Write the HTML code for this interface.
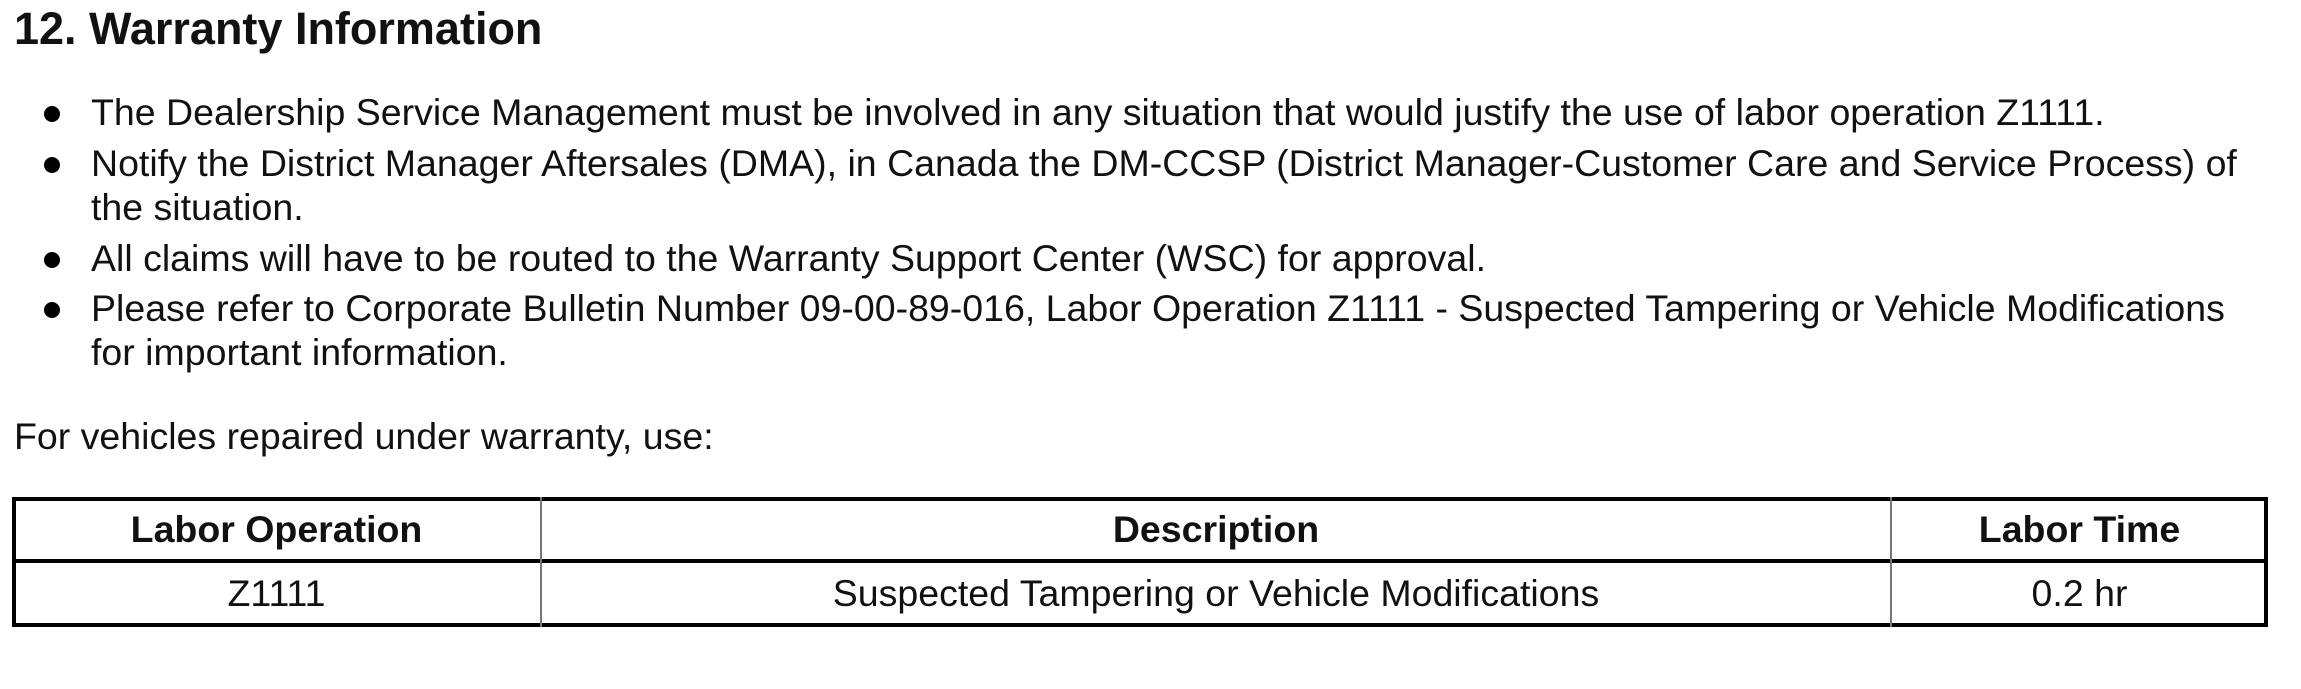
<!DOCTYPE html>
<html><head><meta charset="utf-8"><style>
html,body{margin:0;padding:0;background:#fff;width:2301px;height:689px;overflow:hidden;position:relative;font-family:"Liberation Sans",Arial,sans-serif;color:#111}
.t{position:absolute;white-space:nowrap;font-size:37.5px;line-height:45px}
.title{position:absolute;left:14px;top:4px;font-size:45px;line-height:50px;font-weight:bold;white-space:nowrap}
.dot{position:absolute;width:16px;height:16px;border-radius:50%;background:#000;left:44px}
.tb{position:absolute;left:12px;top:497px;width:2256px;height:130px;border:4px solid #000;box-sizing:border-box}
.hl{position:absolute;left:12px;top:559px;width:2256px;height:4px;background:#000}
.vl{position:absolute;top:497px;height:130px;width:2px;background:#777}
.c{position:absolute;text-align:center;font-size:37.5px;line-height:45px;white-space:nowrap}
</style></head><body>
<div class="title">12. Warranty Information</div>

<div class="dot" style="top:106px"></div>
<div class="t" style="left:91px;top:90px">The Dealership Service Management must be involved in any situation that would justify the use of labor operation Z1111.</div>
<div class="dot" style="top:157px"></div>
<div class="t" style="left:91px;top:141px">Notify the District Manager Aftersales (DMA), in Canada the DM-CCSP (District Manager-Customer Care and Service Process) of</div>
<div class="t" style="left:91px;top:185px">the situation.</div>
<div class="dot" style="top:252px"></div>
<div class="t" style="left:91px;top:236px">All claims will have to be routed to the Warranty Support Center (WSC) for approval.</div>
<div class="dot" style="top:302px"></div>
<div class="t" style="left:91px;top:286px">Please refer to Corporate Bulletin Number 09-00-89-016, Labor Operation Z1111 - Suspected Tampering or Vehicle Modifications</div>
<div class="t" style="left:91px;top:330px">for important information.</div>

<div class="t" style="left:14px;top:414px">For vehicles repaired under warranty, use:</div>

<div class="tb"></div>
<div class="hl"></div>
<div class="vl" style="left:540px"></div>
<div class="vl" style="left:1890px"></div>
<div class="c" style="left:12px;width:529px;top:507px;font-weight:bold">Labor Operation</div>
<div class="c" style="left:541px;width:1350px;top:507px;font-weight:bold">Description</div>
<div class="c" style="left:1891px;width:377px;top:507px;font-weight:bold">Labor Time</div>
<div class="c" style="left:12px;width:529px;top:571px">Z1111</div>
<div class="c" style="left:541px;width:1350px;top:571px">Suspected Tampering or Vehicle Modifications</div>
<div class="c" style="left:1891px;width:377px;top:571px">0.2 hr</div>
</body></html>
